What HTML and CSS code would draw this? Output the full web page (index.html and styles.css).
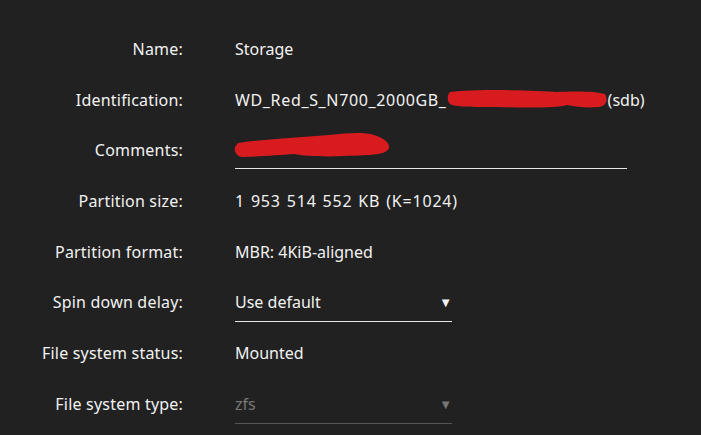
FILE: index.html
```html
<!DOCTYPE html>
<html lang="en">
<head>
    <meta charset="UTF-8">
    <title>Disk Settings</title>
    <link rel="stylesheet" href="styles.css">
</head>
<body>
    <div class="form">
        <div class="label">Name:</div>
        <div class="value">Storage</div>

        <div class="label">Identification:</div>
        <div class="value"><span class="ident">WD_Red_S_N700_2000GB_</span><span class="redact"><svg width="161" height="20" viewBox="0 0 161 20"><path d="M3 3 C30 0 90 1 110 3 C125 2 150 2 158 5 C161 10 160 17 152 18 C140 19 130 18 120 16 C110 19 80 19 50 18 C25 18 8 18 3 15 C0 12 0 6 3 3 Z" fill="#d81b1e"/></svg></span>(sdb)</div>

        <div class="label">Comments:</div>
        <div class="value"><div class="input wide"><svg width="156" height="28" viewBox="0 0 156 28"><path d="M4 12 C20 9 60 7 95 4 C115 2 130 1 140 4 C150 7 156 12 155 17 C152 24 140 24 110 25 C90 26 70 25 60 23 C45 24 20 26 8 26 C2 25 0 20 1 16 Z" fill="#d81b1e"/></svg></div></div>

        <div class="label">Partition size:</div>
        <div class="value digits">1 953 514 552 KB (K=1024)</div>

        <div class="label">Partition format:</div>
        <div class="value">MBR: 4KiB-aligned</div>

        <div class="label">Spin down delay:</div>
        <div class="value"><div class="input select">Use default<span class="arrow">&#9660;</span></div></div>

        <div class="label">File system status:</div>
        <div class="value">Mounted</div>

        <div class="label">File system type:</div>
        <div class="value"><div class="input select disabled">zfs<span class="arrow">&#9660;</span></div></div>
    </div>
</body>
</html>
```

FILE: styles.css
```css
body {
    margin: 0;
    background-color: #212121;
    color: #f2f2f2;
    font-family: "Noto Sans", "Open Sans", sans-serif;
    font-size: 16px;
    line-height: 20px;
}

.form {
    display: grid;
    grid-template-columns: 183px 1fr;
    grid-auto-rows: 50.7px;
    column-gap: 52px;
    align-items: start;
    padding-top: 39px;
}

.label {
    text-align: right;
    letter-spacing: 0.2px;
}

.value {
    display: flex;
    align-items: center;
    white-space: nowrap;
}

.ident {
    letter-spacing: 0.65px;
}

.digits {
    letter-spacing: 0.8px;
    word-spacing: 1px;
}

.redact {
    display: inline-flex;
    margin-top: -2px;
}

.input {
    display: flex;
    align-items: center;
    padding-bottom: 9px;
    border-bottom: 1px solid #e6e6e6;
}

.input.wide {
    width: 392px;
    height: 18px;
    padding-bottom: 10px;
}

.input.wide svg {
    margin-top: -8px;
    margin-left: -1px;
}

.input.select {
    width: 217px;
    justify-content: space-between;
}

.arrow {
    font-size: 13px;
}

.input.disabled {
    color: #777;
    border-bottom-color: #555;
}
```
